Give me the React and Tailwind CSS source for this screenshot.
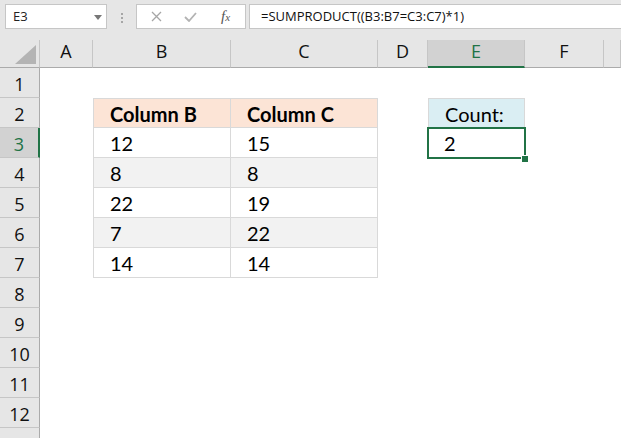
import React from 'react';

const COLS = ['A', 'B', 'C', 'D', 'E', 'F', 'G'];
const ROWS = [1, 2, 3, 4, 5, 6, 7, 8, 9, 10, 11, 12, 13];

const values = {
  2: { B: 'Column B', C: 'Column C', E: 'Count:' },
  3: { B: '12', C: '15', E: '2' },
  4: { B: '8', C: '8' },
  5: { B: '22', C: '19' },
  6: { B: '7', C: '22' },
  7: { B: '14', C: '14' },
};

const FormulaBar = () => (
  <div className="flex items-start h-[40px] bg-[#e6e6e6] pt-[4px] pl-[5px] font-['Open_Sans',sans-serif]">
    {/* name box */}
    <div className="relative flex items-center w-[102px] h-[25px] bg-white border border-[#c6c6c6] pl-[7px] text-[13px] text-[#222]">
      E3
      <svg className="absolute right-[4px] top-[10px]" width="8" height="5" viewBox="0 0 8 5">
        <path d="M0 0 L8 0 L4 5 Z" fill="#777" />
      </svg>
    </div>
    {/* drag dots */}
    <div className="flex flex-col gap-[2px] ml-[14px] mt-[9px]">
      <span className="w-[2px] h-[2px] bg-[#a6a6a6]" />
      <span className="w-[2px] h-[2px] bg-[#a6a6a6]" />
      <span className="w-[2px] h-[2px] bg-[#a6a6a6]" />
    </div>
    {/* cancel / enter / fx */}
    <div className="flex items-center w-[110px] h-[25px] ml-[13px] bg-white border border-[#c6c6c6]">
      <svg className="ml-[14px]" width="11" height="11" viewBox="0 0 11 11">
        <path d="M1 1 L10 10 M10 1 L1 10" stroke="#a6a6a6" strokeWidth="1.3" />
      </svg>
      <svg className="ml-[22px]" width="13" height="10" viewBox="0 0 13 10">
        <path d="M1 5 L5 9 L12 1" stroke="#b3b3b3" strokeWidth="1.8" fill="none" />
      </svg>
      <span className="ml-[24px] italic font-['Liberation_Serif',serif] text-[15px] text-[#555] leading-none">
        f<span className="text-[11px]">x</span>
      </span>
    </div>
    {/* formula input */}
    <div className="flex items-center flex-1 h-[25px] ml-[3px] bg-white border-y border-l border-[#c6c6c6] pl-[11px] text-[13px] text-[#111]">
      =SUMPRODUCT((B3:B7=C3:C7)*1)
    </div>
  </div>
);

const ColumnHeader = ({ col }) => {
  if (col === 'E') {
    return (
      <div className="flex items-end justify-center h-[28px] bg-[#d2d2d2] border-r border-[#c6c6c6] border-b-2 border-b-[#217346] text-[#217346] pb-[1px]">
        {col}
      </div>
    );
  }
  // column G is mostly off screen, its letter isn't visible
  return (
    <div className="flex items-end justify-center h-[28px] bg-[#e6e6e6] border-r border-[#c6c6c6] border-b border-b-[#ababab] text-[#111] pb-[2px]">
      {col !== 'G' && col}
    </div>
  );
};

const RowHeader = ({ row }) => {
  if (row === 3) {
    return (
      <div className="h-[30px] bg-[#d2d2d2] border-b border-[#c6c6c6] border-r-2 border-r-[#217346] text-center leading-[30px] pt-[1px] text-[#217346]">
        {row}
      </div>
    );
  }
  return (
    <div className="h-[30px] bg-[#e6e6e6] border-b border-[#c6c6c6] border-r border-r-[#ababab] text-center leading-[30px] pt-[1px] text-[#111]">
      {row}
    </div>
  );
};

const Cell = ({ row, col }) => {
  const text = values[row] && values[row][col];
  const inTable = (col === 'B' || col === 'C') && row >= 2 && row <= 7;

  if (inTable) {
    let cls = 'h-[30px] pl-4 pt-[1px] leading-[29px] border-r border-b border-[#d9d9d9]';
    if (row === 2) cls += ' bg-[#fce4d6] font-bold border-t';
    else if (row === 4 || row === 6) cls += ' bg-[#f2f2f2]';
    else cls += ' bg-white';
    if (col === 'B') cls += ' border-l';
    return <div className={cls}>{text}</div>;
  }

  if (col === 'E' && row === 2) {
    return (
      <div className="h-[30px] pl-4 pt-[1px] leading-[28px] bg-[#daeef3] border border-[#d9d9d9]">
        {text}
      </div>
    );
  }

  if (col === 'E' && row === 3) {
    return (
      <div className="relative h-[30px] pl-4 pt-[1px] leading-[29px]">
        {text}
        <div className="absolute -top-[1px] -left-[1px] -right-[1px] -bottom-[1px] border-2 border-[#217346]" />
        <div className="absolute -right-[3px] -bottom-[4px] w-[6px] h-[6px] bg-[#217346] outline outline-1 outline-white" />
      </div>
    );
  }

  return <div className="h-[30px] bg-white" />;
};

export default function App() {
  return (
    <div className="w-[621px] h-[438px] overflow-hidden bg-white">
      <FormulaBar />
      <div className="grid grid-cols-[40px_53px_138px_147px_50px_97px_79px_1fr] text-[18px] font-['Open_Sans',sans-serif]">
        {/* corner */}
        <div className="relative h-[28px] bg-[#e6e6e6] border-r border-[#c6c6c6] border-b border-b-[#ababab]">
          <svg className="absolute left-[15px] top-[5px]" width="21" height="19" viewBox="0 0 21 19">
            <path d="M21 0 L21 19 L0 19 Z" fill="#b4b4b4" />
          </svg>
        </div>
        {COLS.map((c) => (
          <ColumnHeader key={c} col={c} />
        ))}

        {ROWS.map((r) => (
          <React.Fragment key={r}>
            <RowHeader row={r} />
            {COLS.map((c) => (
              <div key={c} className="font-['Lato',sans-serif] text-[20px] text-black">
                <Cell row={r} col={c} />
              </div>
            ))}
          </React.Fragment>
        ))}
      </div>
    </div>
  );
}
